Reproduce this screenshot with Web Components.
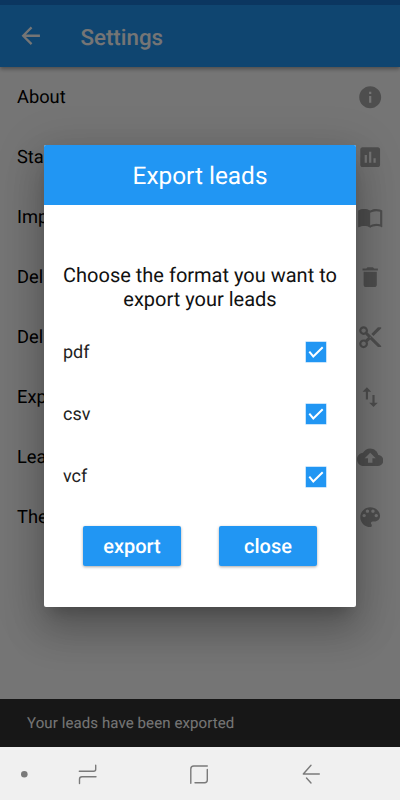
<!DOCTYPE html>
<html><head><meta charset="utf-8">
<style>
html,body{margin:0;padding:0;background:#fff}
body{font-family:Roboto,"Liberation Sans",sans-serif;text-rendering:geometricPrecision}
</style></head>
<body>
<app-shell>
  <app-bar slot="main" title="Settings"></app-bar>
  <settings-row slot="main" label="About" icon="info"></settings-row>
  <settings-row slot="main" label="Sta" icon="chart"></settings-row>
  <settings-row slot="main" label="Imp" icon="book"></settings-row>
  <settings-row slot="main" label="Del" icon="trash"></settings-row>
  <settings-row slot="main" label="Del" icon="cut"></settings-row>
  <settings-row slot="main" label="Exp" icon="swap"></settings-row>
  <settings-row slot="main" label="Lea" icon="cloud"></settings-row>
  <settings-row slot="main" label="The" icon="palette"></settings-row>
  <snack-bar slot="snack">Your leads have been exported</snack-bar>
  <export-dialog slot="dialog" title="Export leads">
    <span slot="message">Choose the format you want to export your leads</span>
    <format-row>pdf</format-row>
    <format-row>csv</format-row>
    <format-row>vcf</format-row>
    <dialog-button slot="actions">export</dialog-button>
    <dialog-button slot="actions">close</dialog-button>
  </export-dialog>
  <nav-bar slot="nav"></nav-bar>
</app-shell>
<script>
const ICONS={
info:'M12 2C6.48 2 2 6.48 2 12s4.48 10 10 10 10-4.48 10-10S17.52 2 12 2zm1 15h-2v-6h2v6zm0-8h-2V7h2v2z',
chart:'M19 3H5c-1.1 0-2 .9-2 2v14c0 1.1.9 2 2 2h14c1.1 0 2-.9 2-2V5c0-1.1-.9-2-2-2zM9 17H7v-7h2v7zm4 0h-2V7h2v10zm4 0h-2v-4h2v4z',
book:'M21 5c-1.11-.35-2.33-.5-3.5-.5-1.95 0-4.05.4-5.5 1.5-1.45-1.1-3.55-1.5-5.5-1.5S2.45 4.9 1 6v14.65c0 .25.25.5.5.5.1 0 .15-.05.25-.05C3.1 20.45 5.05 20 6.5 20c1.95 0 4.05.4 5.5 1.5 1.35-.85 3.8-1.5 5.5-1.5 1.65 0 3.35.3 4.75 1.05.1.05.15.05.25.05.25 0 .5-.25.5-.5V6c-.6-.45-1.25-.75-2-1zm0 13.5c-1.1-.35-2.3-.5-3.5-.5-1.7 0-4.15.65-5.5 1.5V8c1.35-.85 3.8-1.5 5.5-1.5 1.2 0 2.4.15 3.5.5v11.5z',
trash:'M6 19c0 1.1.9 2 2 2h8c1.1 0 2-.9 2-2V7H6v12zM19 4h-3.5l-1-1h-5l-1 1H5v2h14V4z',
cut:'M9.64 7.64c.23-.5.36-1.05.36-1.64 0-2.21-1.79-4-4-4S2 3.79 2 6s1.79 4 4 4c.59 0 1.14-.13 1.64-.36L10 12l-2.36 2.36C7.14 14.13 6.59 14 6 14c-2.21 0-4 1.79-4 4s1.79 4 4 4 4-1.79 4-4c0-.59-.13-1.14-.36-1.64L12 14l7 7h3v-1L9.64 7.64zM6 8c-1.1 0-2-.89-2-2s.9-2 2-2 2 .89 2 2-.9 2-2 2zm0 12c-1.1 0-2-.89-2-2s.9-2 2-2 2 .89 2 2-.9 2-2 2zm6-7.5c-.28 0-.5-.22-.5-.5s.22-.5.5-.5.5.22.5.5-.22.5-.5.5zM19 3l-6 6 2 2 7-7V3z',
swap:'M16 17.01V10h-2v7.01h-3L15 21l4-3.99h-3zM9 3L5 6.99h3V14h2V6.99h3L9 3z',
cloud:'M19.35 10.04C18.67 6.59 15.64 4 12 4 9.11 4 6.6 5.64 5.35 8.04 2.34 8.36 0 10.91 0 14c0 3.31 2.69 6 6 6h13c2.76 0 5-2.24 5-5 0-2.64-2.05-4.78-4.65-4.96zM14 13v4h-4v-4H7l5-5 5 5h-3z',
palette:'M12 3c-4.97 0-9 4.03-9 9s4.03 9 9 9c.83 0 1.5-.67 1.5-1.5 0-.39-.15-.74-.39-1.01-.23-.26-.38-.61-.38-.99 0-.83.67-1.5 1.5-1.5H16c2.76 0 5-2.24 5-5 0-4.42-4.03-8-9-8zm-5.5 9c-.83 0-1.5-.67-1.5-1.5S5.67 9 6.5 9 8 9.67 8 10.5 7.33 12 6.5 12zm3-4C8.67 8 8 7.33 8 6.5S8.67 5 9.5 5s1.5.67 1.5 1.5S10.33 8 9.5 8zm5 0c-.83 0-1.5-.67-1.5-1.5S13.67 5 14.5 5s1.5.67 1.5 1.5S15.33 8 14.5 8zm3 4c-.83 0-1.5-.67-1.5-1.5S16.67 9 17.5 9s1.5.67 1.5 1.5-.67 1.5-1.5 1.5z'
};
function def(name,html){
  customElements.define(name,class extends HTMLElement{
    connectedCallback(){
      if(this.shadowRoot)return;
      const r=this.attachShadow({mode:'open'});
      r.innerHTML=typeof html==='function'?html(this):html;
    }
  });
}
def('app-shell',`<style>
:host{display:block;width:400px;height:800px;position:relative;overflow:hidden;font-family:Roboto,"Liberation Sans",sans-serif}
.page{display:flex;flex-direction:column;height:800px;background:#fff}
.content{flex:1;min-height:0;display:flex;flex-direction:column}
.spacer{flex:1}
.scrim{position:absolute;left:0;top:0;width:400px;height:747px;background:rgba(0,0,0,.54)}
.dlg{position:absolute;left:44px;top:145px;width:312px}
</style>
<div class="page">
 <div class="content"><slot name="main"></slot><div class="spacer"></div><slot name="snack"></slot></div>
 <slot name="nav"></slot>
</div>
<div class="scrim"></div>
<div class="dlg"><slot name="dialog"></slot></div>`);
def('app-bar',h=>`<style>
:host{display:block;background:#2196f3;box-shadow:0 2px 4px rgba(0,0,0,.35);position:relative;color:#fff}
.status{height:5px;background:#1976d2}
.bar{height:62px;display:flex;align-items:center;box-sizing:border-box;padding-left:17px}
svg{width:27.500px;height:27.500px;display:block;flex:none}
.t{margin-left:36px;font-size:22.300px;font-weight:500;line-height:26px;padding-top:3px}
</style><div class="status"></div><div class="bar">
<svg viewBox="0 0 24 24"><path fill="#fff" d="M20 11H7.830l5.590-5.590L12 4l-8 8 8 8 1.410-1.410L7.830 13H20v-2z"/></svg>
<span class="t">${h.getAttribute('title')}</span></div>`);
def('settings-row',h=>`<style>
:host{display:flex;height:60px;align-items:center;justify-content:space-between;padding:0 17px;color:#000;font-size:18.300px;box-sizing:border-box}
span{display:block;line-height:22px;margin-top:1px}
svg{width:26.400px;height:26.400px;display:block;fill:#ababab;margin-right:-.2px}
</style><span>${h.getAttribute('label')}</span>
<svg viewBox="0 0 24 24"><path d="${ICONS[h.getAttribute('icon')]}"/></svg>`);
def('snack-bar',`<style>
:host{display:flex;align-items:center;height:48px;padding-left:27px;background:#323232;color:#fff;font-size:15px;letter-spacing:.1px;box-sizing:border-box}
</style><slot></slot>`);
def('export-dialog',h=>`<style>
:host{display:block;width:312px;height:462px;background:#fff;border-radius:2px;
box-shadow:0 24px 38px 3px rgba(0,0,0,.18),0 9px 46px 8px rgba(0,0,0,.12),0 11px 15px -7px rgba(0,0,0,.2);color:#000}
header{height:60px;background:#2196f3;color:#fff;font-size:24.400px;display:flex;align-items:center;justify-content:center;border-radius:2px 2px 0 0}
.msg{font-size:20px;line-height:24px;text-align:center;padding:58px 10px 0;color:#111}
.list{margin-top:10px;padding:0 30px 0 19px;display:flex;flex-direction:column}
.actions{display:flex;justify-content:space-between;padding:0 39px;margin-top:18px}
</style>
<header>${h.getAttribute('title')}</header>
<div class="msg"><slot name="message"></slot></div>
<div class="list"><slot></slot></div>
<div class="actions"><slot name="actions"></slot></div>`);
def('format-row',`<style>
:host{display:flex;height:62.300px;align-items:center;justify-content:space-between;font-size:18px;color:#222}
.box{width:20px;height:20px;background:#2196f3;display:block;box-shadow:0 0 0 .5px #90caf9}
svg{display:block;width:20px;height:20px}
</style><slot></slot>
<span class="box"><svg viewBox="0 0 20 20"><path d="M3.300 9.700l4 4.800 9.400-9.200" fill="none" stroke="#fff" stroke-width="2"/></svg></span>`);
def('dialog-button',`<style>
:host{display:flex;width:98px;height:40px;align-items:center;justify-content:center;background:#2196f3;color:#fff;font-size:20px;font-weight:500;border-radius:2px;box-shadow:0 1px 3px rgba(0,0,0,.35)}
</style><slot></slot>`);
def('nav-bar',`<style>
:host{display:block;height:53px;background:#f0f0f0;flex:none}
svg{display:block;width:400px;height:53px}
</style>
<svg viewBox="0 747 400 53" fill="none" stroke="#7a7a7a" stroke-width="1.400" stroke-linecap="round" stroke-linejoin="round">
<circle cx="24.300" cy="774.300" r="3.300" fill="#7a7a7a" stroke="none"/>
<path d="M95.700 765.300v4q0 2-2 2H79.300"/>
<path d="M96 776.700H82q-2.500 0-2.500 2.500v4.300"/>
<path d="M190.800 783.300V769q0-3 3-3h13.500"/>
<path d="M207.300 769.500V780q0 2.700-2.700 2.700H195"/>
<path d="M319.300 774H303.300L311 765.300"/>
<path d="M306.500 778L311 783"/>
</svg>`);
</script>
</body></html>
